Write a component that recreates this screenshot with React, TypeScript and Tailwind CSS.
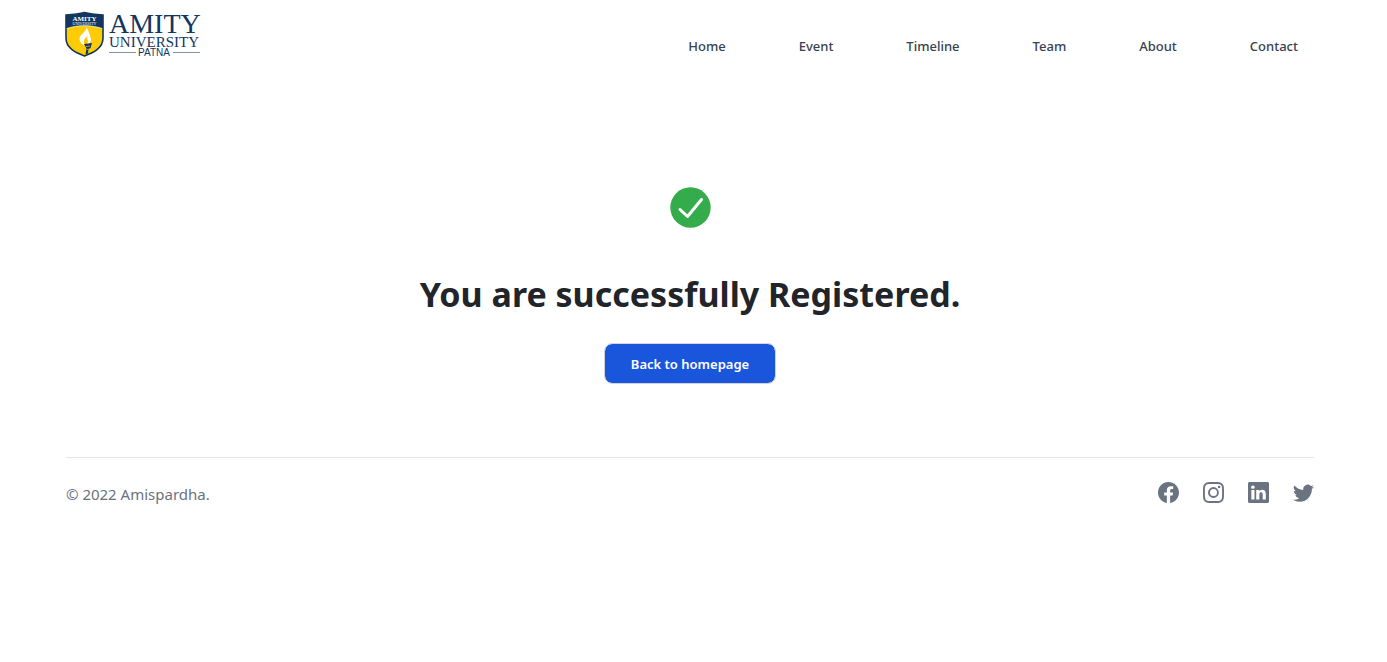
import { BsFacebook, BsInstagram, BsLinkedin, BsTwitter } from "react-icons/bs";

const navItems = ["Home", "Event", "Timeline", "Team", "About", "Contact"];

const socials = [
  { name: "Facebook", Icon: BsFacebook },
  { name: "Instagram", Icon: BsInstagram },
  { name: "LinkedIn", Icon: BsLinkedin },
  { name: "Twitter", Icon: BsTwitter },
];

function Logo() {
  return (
    <svg width="138" height="56" viewBox="0 -6 138 56" role="img" aria-label="Amity University Patna">
      <path
        d="M2 5C10 4.500 15 4 20.500 2.500C26 4 31 4.500 39 5V28C39 38 30 42.500 20.500 46C11 42.500 2 38 2 28Z"
        fill="#ffcb05"
        stroke="#12365f"
        strokeWidth="1.600"
      />
      <path d="M2 5C10 4.500 15 4 20.500 2.500C26 4 31 4.500 39 5V18.500C27 14.500 14 14.500 2 18.500Z" fill="#12365f" />
      <path d="M2.700 18.500C14 14.700 27 14.700 38.300 18.500" fill="none" stroke="#fff" strokeWidth="0.600" />
      <text x="20.500" y="11" textAnchor="middle" fontSize="7" fontWeight="700" fill="#fff" className="font-['Liberation_Serif',serif]">AMITY</text>
      <text x="20.500" y="14.500" textAnchor="middle" fontSize="4" fill="#fff" className="font-['Liberation_Serif',serif]">UNIVERSITY</text>
      <path
        d="M22 17C24 21 15.500 24 15.500 29C15.500 32 18 34.500 21 35.500C18.800 31 20 28.500 23.500 26C22.500 29 24.500 30 24 32C23.800 33 23 34 22.500 35C26 34 28 31 26.500 27C25.500 24.500 24.800 20 22 17Z"
        fill="#fff"
      />
      <path d="M20 34L28 33L26.500 38L24.500 39L24 43.500L21.500 44.500L22.500 38.500Z" fill="#12365f" />
      <path d="M22 36.500L26 36M23 39.500L24.300 39.300" stroke="#ffcb05" strokeWidth="0.700" />
      <g fill="#12365f" className="font-['Liberation_Serif',serif]">
        <text x="45" y="23" fontSize="28">AMITY</text>
        <text x="45" y="37" fontSize="15">UNIVERSITY</text>
      </g>
      <text x="90" y="46" textAnchor="middle" fontSize="10" fill="#12365f" className="font-['Liberation_Sans',sans-serif]">PATNA</text>
      <path d="M45 42.500H72M109 42.500H136" stroke="#8095aa" />
    </svg>
  );
}

export default function App() {
  return (
    <div className="bg-white pr-[7px] font-['Noto_Sans',sans-serif]">
      <div className="mx-auto max-w-7xl px-4">
        <header className="flex items-start justify-between pt-1">
          <a href="#home" className="-ml-0.5 block">
            <Logo />
          </a>
          <nav className="flex gap-[73px] pt-8 pr-4">
            {navItems.map((item) => (
              <a key={item} href={`#${item.toLowerCase()}`} className="text-[13px] leading-5 font-medium text-[#374151]">
                {item}
              </a>
            ))}
          </nav>
        </header>

        <main className="flex flex-col items-center pt-[127px] pb-[73px]">
          <svg width="41" height="41" viewBox="0 0 41 41" aria-hidden="true">
            <circle cx="20.500" cy="20.500" r="20.200" fill="#35ac4b" />
            <path d="M10 22.500L17.500 29.500L31.500 12.500" fill="none" stroke="#fff" strokeWidth="3" strokeLinecap="round" strokeLinejoin="round" />
          </svg>
          <h1 className="mt-11 text-center text-[34px] leading-[44px] font-bold text-[#212529]">
            You are successfully Registered.
          </h1>
          <button
            type="button"
            className="mt-[27px] h-[41px] rounded-lg border border-[#d1d5db] bg-[#1a56db] bg-clip-padding px-[26px] text-[13px] leading-5 font-semibold text-white"
          >
            Back to homepage
          </button>
        </main>

        <footer className="flex items-start justify-between border-t border-[#e5e7eb] pt-6">
          <p className="text-[15px] leading-6 text-[#6b7280]">© 2022 Amispardha.</p>
          <ul className="flex gap-6">
            {socials.map(({ name, Icon }) => (
              <li key={name}>
                <a href={`#${name.toLowerCase()}`} aria-label={name} className="block text-[#6b7280]">
                  <Icon size={21} />
                </a>
              </li>
            ))}
          </ul>
        </footer>
      </div>
    </div>
  );
}
